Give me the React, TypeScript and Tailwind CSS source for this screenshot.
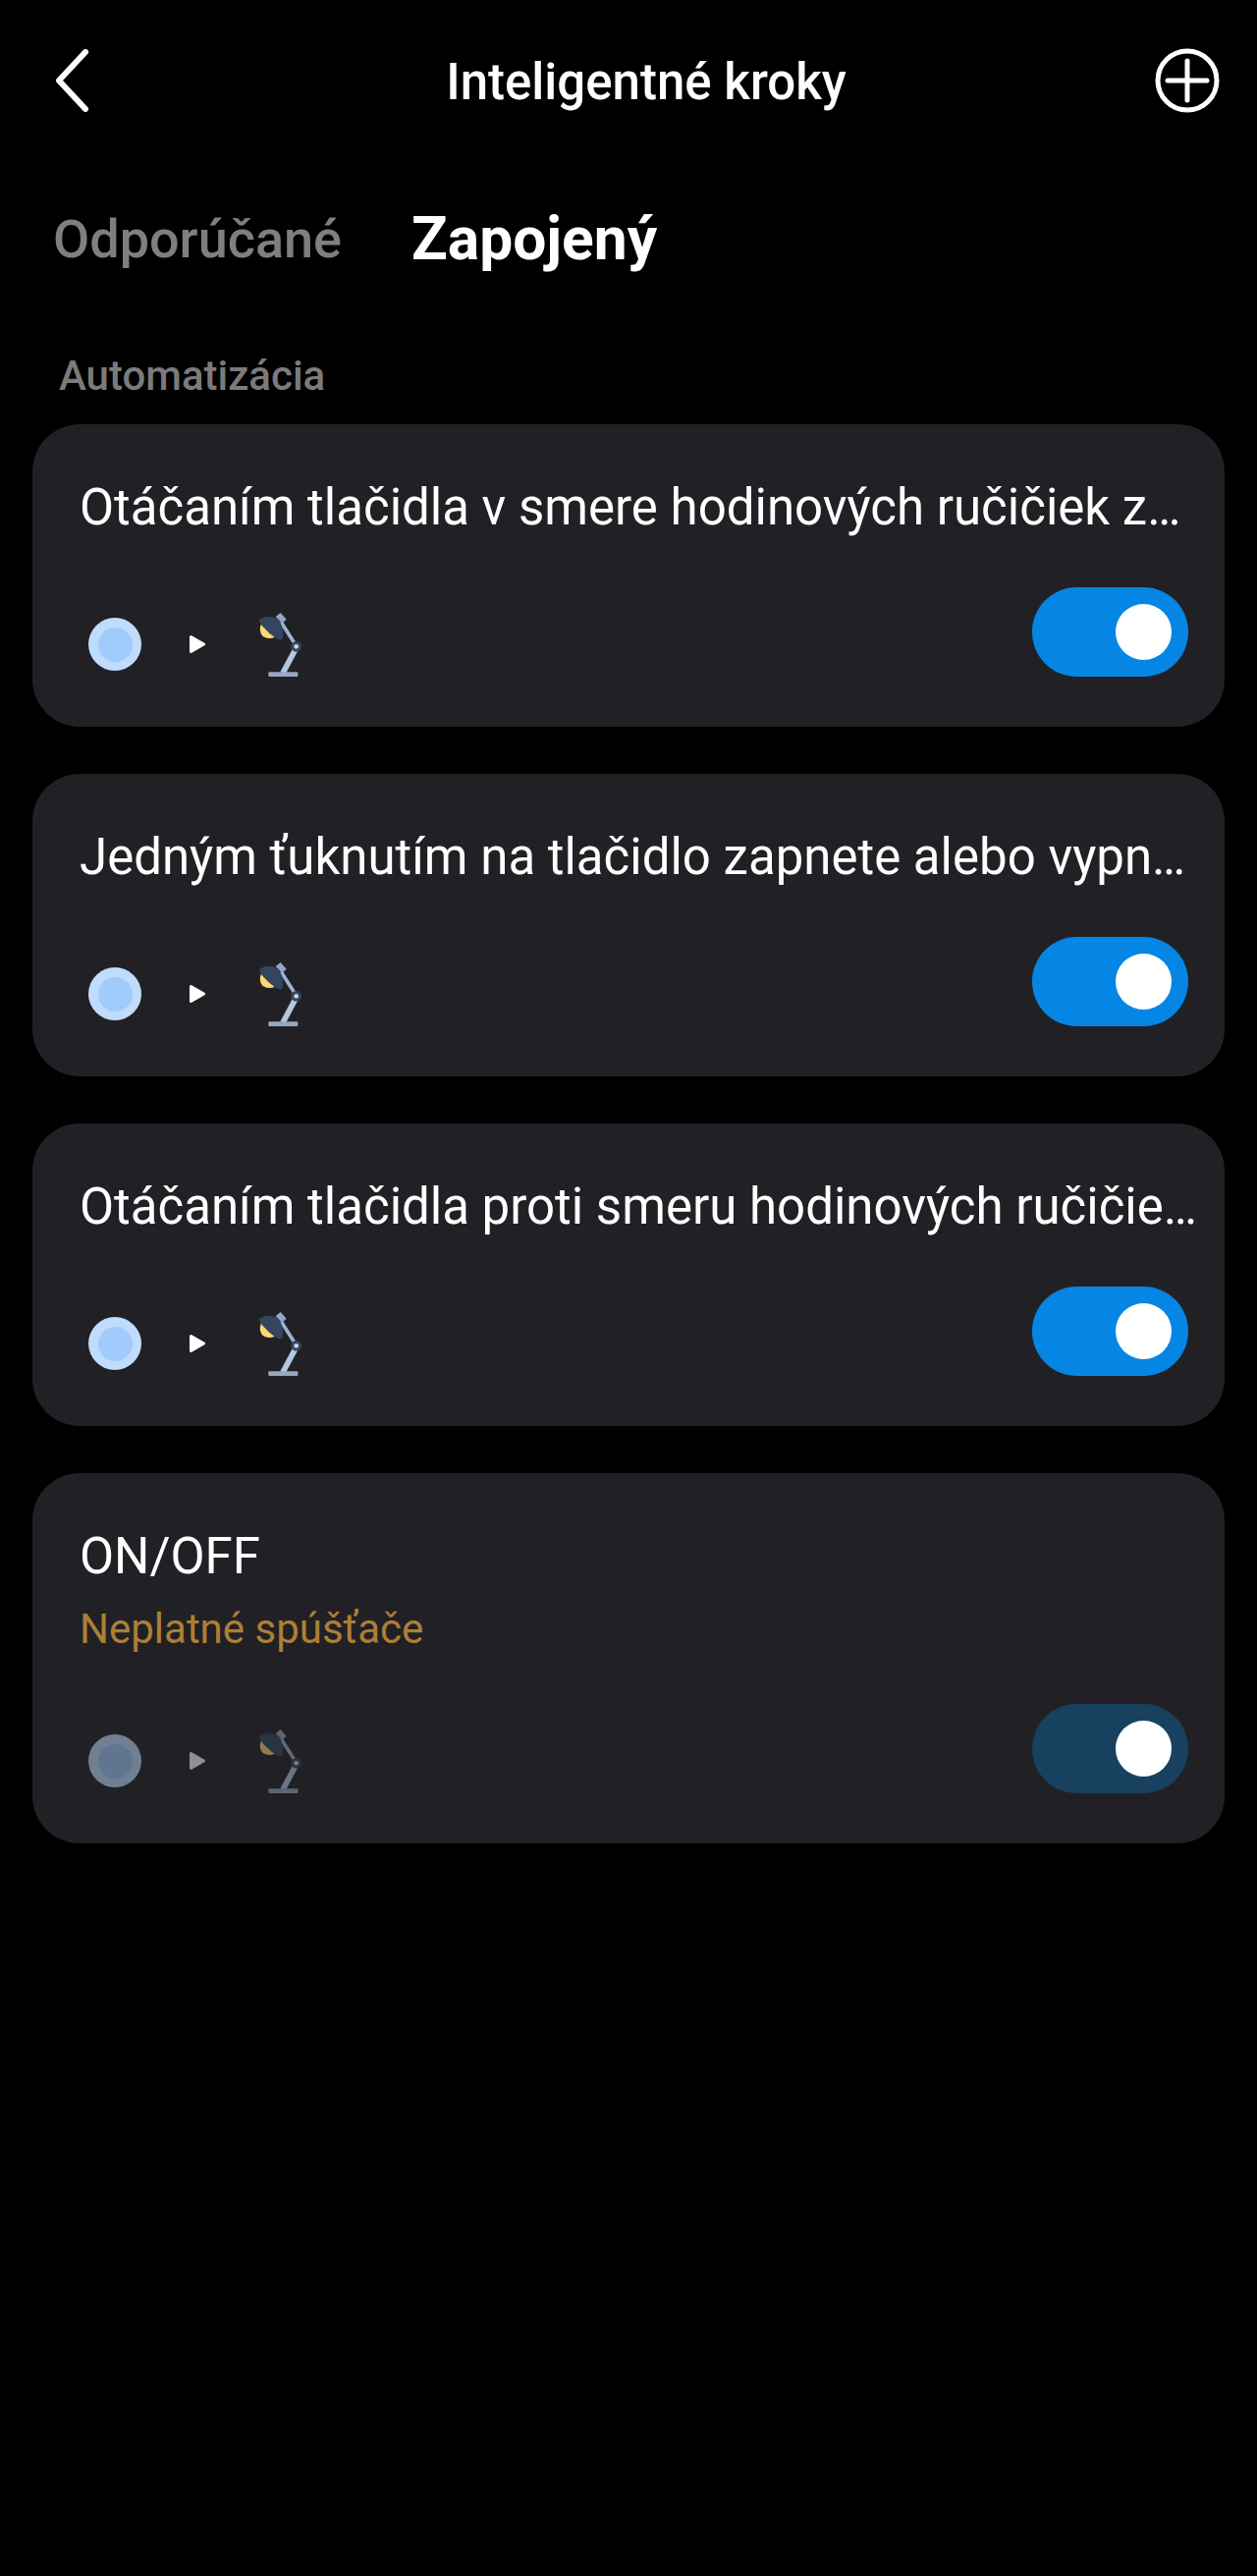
import React from "react";

function Lamp() {
  return (
    <svg width="50" height="66" viewBox="600 69 150 198" className="shrink-0">
      <path d="M618 106 Q609 128 622 143 Q638 154 659 147 Z" fill="#fbd872" />
      <path d="M678 100 L727 176" stroke="#9fb2cf" strokeWidth="11" fill="none" />
      <path d="M662 84 L677 72 L695 92 L682 104 Z" fill="#93a6c4" />
      <path d="M612 92 Q640 76 668 90 Q688 112 684 148 Q680 158 664 150 Q640 134 625 116 Q612 102 612 92 Z" fill="#34455f" />
      <path d="M722 185 L684 256" stroke="#b4c6e0" strokeWidth="17" fill="none" />
      <circle cx="725" cy="175" r="16" fill="#34455f" />
      <circle cx="725" cy="175" r="7" fill="#c8d6e8" />
      <rect x="640" y="253" width="90" height="14" rx="3" fill="#97a8c2" />
    </svg>
  );
}

function Flow({ disabled }: { disabled?: boolean }) {
  return (
    <div className={disabled ? "flex items-center pl-[9px] opacity-50" : "flex items-center pl-[9px]"}>
      <div className="flex h-[54px] w-[54px] items-center justify-center rounded-full bg-[#bfdcfd]">
        <div className="h-[35px] w-[35px] rounded-full bg-[#a0cbfa]" />
      </div>
      <svg width="16" height="18" viewBox="0 0 16 18" className="ml-[49px] mr-[51px] shrink-0">
        <path d="M1.5 1.5 L14.5 9 L1.5 16.5 Z" fill="#fff" stroke="#fff" strokeWidth="3" strokeLinejoin="round" />
      </svg>
      <Lamp />
    </div>
  );
}

function Toggle({ disabled }: { disabled?: boolean }) {
  return (
    <div
      className={
        disabled
          ? "flex h-[91px] w-[159px] items-center justify-end rounded-full bg-[#17415f] pr-[17px]"
          : "flex h-[91px] w-[159px] items-center justify-end rounded-full bg-[#0586e4] pr-[17px]"
      }
    >
      <div className="h-[57px] w-[57px] rounded-full bg-white" />
    </div>
  );
}

function Card({ title, sub, disabled }: { title: string; sub?: string; disabled?: boolean }) {
  return (
    <div className="rounded-[48px] bg-[#212125] pb-[51px] pl-[48px] pr-[37px] pt-[52px]">
      <div className="-mr-3 truncate text-[51px] leading-[66px] text-white">{title}</div>
      {sub && <div className="mt-[13px] text-[42px] leading-[56px] text-[#ad7f36]">{sub}</div>}
      <div className="mt-[48px] flex items-end justify-between">
        <Flow disabled={disabled} />
        <Toggle disabled={disabled} />
      </div>
    </div>
  );
}

export default function App() {
  return (
    <div className="min-h-[2623px] w-full bg-black font-['Roboto',sans-serif]">
      <div className="flex h-[164px] items-center justify-between pl-[54px] pr-[38px]">
        <svg width="38" height="64" viewBox="0 0 38 64" className="shrink-0">
          <path d="M33 3 L6 32 L33 61" fill="none" stroke="#fff" strokeWidth="6" strokeLinecap="round" strokeLinejoin="round" />
        </svg>
        <div className="ml-[48px] mt-1 text-[51px] font-medium leading-[56px] text-white">Inteligentné kroky</div>
        <svg width="66" height="66" viewBox="0 0 66 66" className="shrink-0">
          <circle cx="33" cy="33" r="30" fill="none" stroke="#fff" strokeWidth="5" />
          <path d="M13 33 H53 M33 13 V53" fill="none" stroke="#fff" strokeWidth="5" strokeLinecap="round" />
        </svg>
      </div>
      <div className="mt-[42px] flex items-center gap-[71px] pl-[54px]">
        <div className="text-[54px] font-medium leading-[76px] text-[#7f7f7f]">Odporúčané</div>
        <div className="text-[60.5px] font-bold leading-[76px] text-white">Zapojený</div>
      </div>
      <div className="mt-[73px] pl-[60px] text-[42px] font-medium leading-[56px] text-[#7b7b7b]">Automatizácia</div>
      <div className="mt-[21px] flex flex-col gap-[48px] px-[33px]">
        <Card title="Otáčaním tlačidla v smere hodinových ručičiek zapnete alebo vypnete" />
        <Card title="Jedným ťuknutím na tlačidlo zapnete alebo vypnete svetlo" />
        <Card title="Otáčaním tlačidla proti smeru hodinových ručičiek zapnete alebo vypnete" />
        <Card title="ON/OFF" sub="Neplatné spúšťače" disabled />
      </div>
    </div>
  );
}
